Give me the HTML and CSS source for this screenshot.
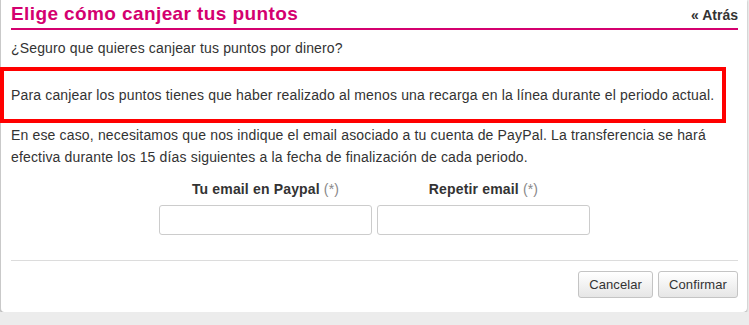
FILE: index.html
```html
<!DOCTYPE html>
<html lang="es">
<head>
<meta charset="utf-8">
<title>Elige cómo canjear tus puntos</title>
<link rel="stylesheet" href="styles.css">
</head>
<body>
<div class="card">
  <div class="header">
    <h1 class="title">Elige cómo canjear tus puntos</h1>
    <a class="back" href="#">« Atrás</a>
  </div>
  <p class="question">¿Seguro que quieres canjear tus puntos por dinero?</p>
  <div class="notice">Para canjear los puntos tienes que haber realizado al menos una recarga en la línea durante el periodo actual.</div>
  <p class="info">En ese caso, necesitamos que nos indique el email asociado a tu cuenta de PayPal. La transferencia se hará efectiva durante los 15 días siguientes a la fecha de finalización de cada periodo.</p>
  <div class="fields">
    <div class="field">
      <label class="label">Tu email en Paypal <span class="req">(*)</span></label>
      <input class="input" type="text">
    </div>
    <div class="field">
      <label class="label">Repetir email <span class="req">(*)</span></label>
      <input class="input" type="text">
    </div>
  </div>
  <div class="actions">
    <button class="btn">Cancelar</button>
    <button class="btn">Confirmar</button>
  </div>
</div>
</body>
</html>
```
FILE: styles.css
```css
html, body {
  margin: 0;
  padding: 0;
  background: #ececec;
  font-family: "Liberation Sans", Arial, sans-serif;
  color: #333;
  letter-spacing: 0.16px;
}
.card {
  width: 727px;
  background: #fff;
  border-left: 1px solid #c9c9c9;
  border-radius: 0 0 4px 4px;
  box-shadow: 0 1px 2px rgba(0,0,0,0.35);
  padding: 0 9px 14px 10px;
}
.header {
  display: flex;
  justify-content: space-between;
  align-items: baseline;
  border-bottom: 2px solid #d4006f;
  padding-top: 3px;
  padding-bottom: 3px;
}
.title {
  margin: 0;
  font-size: 19px;
  line-height: 22px;
  font-weight: bold;
  letter-spacing: 0.4px;
  color: #d4006f;
}
.back {
  font-size: 14px;
  font-weight: bold;
  letter-spacing: 0;
  color: #333;
  text-decoration: none;
}
.question {
  margin: 8px 0 0;
  font-size: 14px;
  line-height: 20px;
}
.notice {
  margin: 9px 0 0 -11px;
  width: 711px;
  border: 4px solid #ff0000;
  padding: 14px 0 14px 7px;
  font-size: 14px;
  line-height: 20px;
}
.info {
  margin: 0;
  padding-top: 1px;
  font-size: 14px;
  line-height: 22px;
}
.fields {
  display: flex;
  justify-content: center;
  gap: 5px;
  margin-top: 11px;
  padding-bottom: 25px;
  border-bottom: 1px solid #dcdcdc;
}
.field {
  display: flex;
  flex-direction: column;
  align-items: center;
  width: 213px;
}
.label {
  font-size: 14px;
  line-height: 20px;
  font-weight: bold;
  color: #333;
  margin-bottom: 6px;
}
.req {
  font-weight: normal;
  color: #888;
}
.input {
  box-sizing: border-box;
  width: 213px;
  height: 30px;
  border: 1px solid #ccc;
  border-radius: 3px;
  background: #fff;
  margin: 0;
}
.actions {
  display: flex;
  justify-content: flex-end;
  gap: 5px;
  margin-top: 10px;
}
.btn {
  box-sizing: border-box;
  height: 27px;
  padding: 0 10px;
  font-family: "Liberation Sans", Arial, sans-serif;
  font-size: 13px;
  letter-spacing: 0.1px;
  color: #333;
  background: linear-gradient(#ffffff, #e6e6e6);
  border: 1px solid #c4c4c4;
  border-radius: 3px;
}
```
